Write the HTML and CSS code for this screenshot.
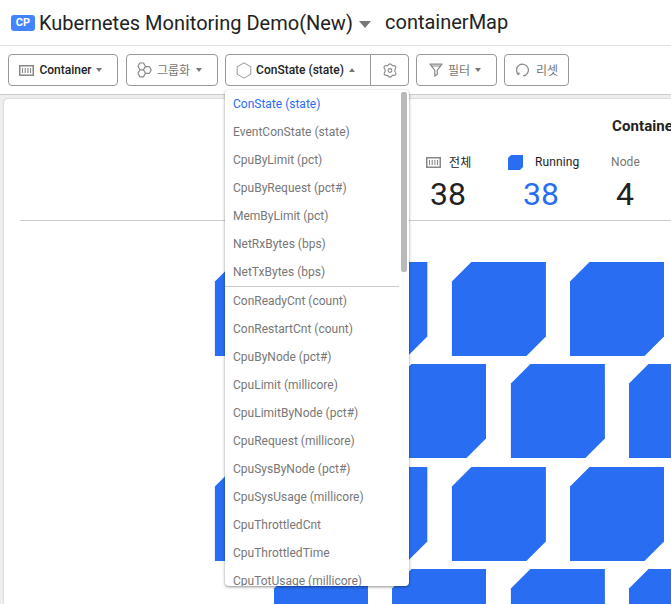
FILE: index.html
```html
<!DOCTYPE html>
<html lang="ko">
<head>
<meta charset="utf-8">
<title>containerMap</title>
<link rel="stylesheet" href="styles.css">
</head>
<body>
<svg class="defs" width="0" height="0">
  <symbol id="container" viewBox="0 0 15 11"><path d="M.75.75h13.5v9.5H.75z" fill="none" stroke="currentColor" stroke-width="1.5"/><path d="M3.5 3v5M6.2 3v5M8.9 3v5M11.5 3v5" stroke="currentColor" stroke-width="1.1"/></symbol>
  <path id="tile" d="M.5 20 20 .5H94.5V75L75 94.5H.5z"/>
</svg>
<header class="header">
  <span class="badge">CP</span>
  <h1 class="project">Kubernetes Monitoring Demo(New)</h1>
  <i class="caret caret-lg"></i>
  <h2 class="page">containerMap</h2>
</header>
<nav class="toolbar">
  <button class="btn btn-container"><svg class="ico-container"><use href="#container"/></svg><b>Container</b><i class="caret"></i></button>
  <button class="btn btn-group"><svg width="15" height="16" viewBox="0 0 15 16" fill="none" stroke="#888" stroke-width="1.2" stroke-linejoin="round"><path d="M2.900 1h3.600l1.900 3.300-1.900 3.500H2.900L1 4.300zM2.900 7.800h3.600l1.900 3.500-1.900 3.600H2.900L1 11.300zM9 4.700h3.400l1.900 3.300-1.900 3.300H8.400M6.500 7.800 8.400 4.700"/></svg><span>그룹화</span><i class="caret"></i></button>
  <div class="metric">
    <button class="btn btn-metric"><svg width="16" height="17" viewBox="0 0 16 17" fill="none" stroke="#999"><path d="M8 .9 14.800 4.700v7.600L8 16.100 1.200 12.300V4.700z"/></svg><b>ConState (state)</b><i class="caret up"></i></button>
    <button class="btn btn-gear"><svg width="14" height="15" viewBox="0 0 14 15" fill="none" stroke="#888" stroke-width="1.100"><path d="M5 2.200Q7-.400 9 2.200L9.800 2.700Q13 2.300 12.800 4.500 12.700 5.400 11.900 6.500V8.500Q13.700 10.700 12.500 11.800 11.600 12.600 9.800 12.300L9 12.800Q7 15.400 5 12.800L4.200 12.300Q1 12.700 1.200 10.500 1.300 9.600 2.100 8.500V6.500Q.3 4.300 1.500 3.200 2.400 2.400 4.200 2.700z" stroke-linejoin="round"/><circle cx="7" cy="7.500" r="1.900"/></svg></button>
    <div class="menu">
      <ul class="list">
        <li class="active">ConState (state)</li><li>EventConState (state)</li><li>CpuByLimit (pct)</li><li>CpuByRequest (pct#)</li><li>MemByLimit (pct)</li><li>NetRxBytes (bps)</li><li>NetTxBytes (bps)</li>
      </ul>
      <ul class="list more">
        <li>ConReadyCnt (count)</li><li>ConRestartCnt (count)</li><li>CpuByNode (pct#)</li><li>CpuLimit (millicore)</li><li>CpuLimitByNode (pct#)</li><li>CpuRequest (millicore)</li><li>CpuSysByNode (pct#)</li><li>CpuSysUsage (millicore)</li><li>CpuThrottledCnt</li><li>CpuThrottledTime</li><li>CpuTotUsage (millicore)</li>
      </ul>
      <div class="thumb"></div>
    </div>
  </div>
  <button class="btn btn-filter"><svg width="14" height="14" viewBox="0 0 14 14" fill="none" stroke="#888" stroke-width="1.200"><path d="M.6 1.200h12.800M1.100 1.400 5.800 7.200V13L8.300 11.300V7.200L12.900 1.400M2.300 3H11.700"/></svg><span>필터</span><i class="caret"></i></button>
  <button class="btn btn-reset"><svg width="14" height="14" viewBox="0 0 14 14" fill="none" stroke="#888" stroke-width="1.200"><path d="M2.400 11.300A5.900 5.900 0 1 1 7.200 12.900M.8 10.600l1.900.9.500-2"/></svg><span>리셋</span></button>
</nav>
<main class="panel">
  <section class="summary">
    <h3 class="summary-title">Container</h3>
    <div class="stats">
      <div class="stat total"><div class="label"><svg class="ico-container"><use href="#container"/></svg><span>전체</span></div><div class="num">38</div></div>
      <div class="stat running"><div class="label"><svg width="15" height="15" viewBox="0 0 15 15" fill="#296df3"><path d="M0 3 3 0h12v12l-3 3H0z"/></svg><span>Running</span></div><div class="num">38</div></div>
      <div class="stat node"><div class="label">Node</div><div class="num">4</div></div>
    </div>
  </section>
  <svg class="map" width="667" height="383" viewBox="4 221 667 383" fill="#296df3">
    <g><use href="#tile" x="214.400" y="261.400"/><use href="#tile" x="332.800" y="261.400"/><use href="#tile" x="451.400" y="261.400"/><use href="#tile" x="569.500" y="261.400"/></g>
    <g><use href="#tile" x="273.500" y="363.500"/><use href="#tile" x="391.500" y="363.500"/><use href="#tile" x="510.400" y="363.500"/><use href="#tile" x="628.500" y="363.500"/></g>
    <g><use href="#tile" x="214.400" y="466.400"/><use href="#tile" x="332.800" y="466.400"/><use href="#tile" x="451.400" y="466.400"/><use href="#tile" x="569.500" y="466.400"/></g>
    <g><use href="#tile" x="273.500" y="568.500"/><use href="#tile" x="391.500" y="568.500"/><use href="#tile" x="510.400" y="568.500"/><use href="#tile" x="628.500" y="568.500"/></g>
  </svg>
</main>
</body>
</html>
```
FILE: styles.css
```css
* { box-sizing: border-box; }
body { margin: 0; width: 671px; height: 604px; overflow: hidden; background: #eee; color: #222; font-family: Roboto, "Noto Sans CJK KR", sans-serif; display: flex; flex-direction: column; }
h1, h2, h3, ul { margin: 0; padding: 0; font-weight: 400; }
svg { display: block; flex: none; }
.defs { position: absolute; }
.header { height: 46px; flex: none; display: flex; align-items: center; padding-left: 11px; background: #fff; border-bottom: 1px solid #e2e2e2; white-space: nowrap; }
.badge { width: 24px; height: 16px; border-radius: 3px; background: #4285ff; color: #fff; font-size: 11px; font-weight: 700; line-height: 16px; text-align: center; }
.project { width: 314px; margin-left: 4px; font-size: 20px; line-height: 24px; }
.page { margin-left: 14px; margin-top: -1px; font-size: 20px; line-height: 24px; }
.caret { border: 3.5px solid transparent; border-top: 4px solid #777; border-bottom: 0; }
.caret.up { border-top: 0; border-bottom: 4px solid #777; }
.caret-lg { margin: 4px 0 0 6px; border-width: 7px 6px 0; }
.toolbar { height: 49px; flex: none; display: flex; align-items: flex-start; padding: 8px 0 0 8px; background: #fff; border-bottom: 1px solid #ccc; }
.btn { height: 32px; display: flex; align-items: center; border: 1px solid #999; border-radius: 4px; background: #fff; color: #777; padding: 0; font: 12px Roboto, "Noto Sans CJK KR", sans-serif; white-space: nowrap; }
.btn b { font-weight: 500; color: #222; }
.btn span { position: relative; top: -1px; }
.ico-container { width: 15px; height: 11px; color: #888; }
.btn-container { width: 110px; padding-left: 10px; }
.btn-container b { width: 53px; margin: 0 4px 0 5px; }
.btn-group { width: 92px; margin-left: 8px; padding-left: 10px; }
.btn-group span { width: 33px; margin: 0 6px 0 5px; }
.metric { position: relative; display: flex; margin-left: 7px; }
.btn-metric { width: 146px; padding-left: 10px; border-radius: 4px 0 0 4px; }
.btn-metric b { width: 88px; margin: 0 5px 0 4px; }
.btn-gear { width: 39px; margin-left: -1px; justify-content: center; border-radius: 0 4px 4px 0; }
.btn-filter { width: 81px; margin-left: 7px; padding-left: 12px; }
.btn-filter span { width: 22px; margin: 0 5px; }
.btn-reset { width: 65px; margin-left: 7px; padding-left: 11px; }
.btn-reset span { margin-left: 6px; }
.menu { position: absolute; z-index: 2; left: 0; top: 36px; width: 184px; height: 496px; overflow: hidden; background: #fff; border-radius: 4px; box-shadow: 0 1px 3px rgba(0, 0, 0, .45); }
.list { list-style: none; width: 174px; }
.list li { height: 28px; padding-left: 8px; font-size: 12px; line-height: 28px; color: #777; white-space: nowrap; }
.list .active { color: #296df3; }
.more { border-top: 1px solid #ccc; }
.thumb { position: absolute; right: 2px; top: 2px; width: 6px; height: 180px; border-radius: 2px; background: #b9b9b9; }
.panel { width: 667px; height: 505px; flex: none; margin: 4px 0 0 4px; background: #fff; border-radius: 4px 0 0; box-shadow: 0 0 2px rgba(0, 0, 0, .25); }
.summary { height: 122px; margin-left: 16px; padding-top: 17px; border-bottom: 1px solid #ccc; }
.summary-title { margin-left: 592px; font-size: 15px; font-weight: 700; line-height: 21px; letter-spacing: .1px; white-space: nowrap; }
.stats { display: flex; margin-left: 406px; padding-top: 15px; }
.label { display: flex; align-items: center; height: 20px; font-size: 12px; letter-spacing: .1px; }
.num { font-size: 32px; line-height: 40px; margin-top: 2px; }
.total { width: 82px; }
.total .label span { margin: -2px 0 0 8px; }
.total .num { margin-left: 4px; }
.running { width: 103px; }
.running .label span { margin-left: 12px; }
.running .num { margin-left: 15px; color: #296df3; }
.node .label { color: #777; }
.node .num { margin-left: 5px; }
```
